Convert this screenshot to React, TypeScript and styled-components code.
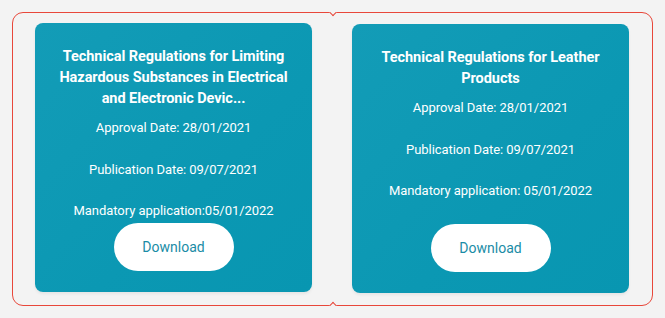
import { FC } from "react";
import styled, { createGlobalStyle } from "styled-components";

type Regulation = {
  title: string;
  approval: string;
  publication: string;
  mandatory: string;
  offset?: number;
};

const regulations: Regulation[] = [
  {
    title:
      "Technical Regulations for Limiting Hazardous Substances in Electrical and Electronic Devic...",
    approval: "Approval Date: 28/01/2021",
    publication: "Publication Date: 09/07/2021",
    mandatory: "Mandatory application:05/01/2022",
  },
  {
    title: "Technical Regulations for Leather Products",
    approval: "Approval Date: 28/01/2021",
    publication: "Publication Date: 09/07/2021",
    mandatory: "Mandatory application: 05/01/2022",
    offset: 1,
  },
];

const App: FC = () => (
  <>
    <GlobalStyle />
    <Page>
      <Slider>
        {regulations.map((item) => (
          <Slot key={item.title}>
            <Card $offset={item.offset ?? 0}>
              <Title>{item.title}</Title>
              <Detail>{item.approval}</Detail>
              <Detail>{item.publication}</Detail>
              <Detail>{item.mandatory}</Detail>
              <DownloadButton>Download</DownloadButton>
            </Card>
          </Slot>
        ))}
      </Slider>
    </Page>
  </>
);

export default App;

const GlobalStyle = createGlobalStyle`
  html, body {
    margin: 0;
    padding: 0;
    background: #f3f3f3;
  }
  body {
    font-family: Roboto, "Liberation Sans", sans-serif;
  }
`;

const Page = styled.div`
  width: 665px;
  height: 318px;
  padding: 12px 12px 0 12px;
  box-sizing: border-box;
`;

const Slider = styled.div`
  position: relative;
  width: 641px;
  height: 294px;
  box-sizing: border-box;
  border: 1px solid #e8473a;
  border-radius: 11px;
  display: flex;
  padding: 10px 23px 0 22px;
  gap: 40px;

  &::before,
  &::after {
    content: "";
    position: absolute;
    left: 317px;
    width: 4px;
    height: 4px;
    background: #f3f3f3;
    border: 1px solid #e8473a;
    transform: rotate(45deg);
  }

  &::before {
    top: -4px;
    border-top-color: transparent;
    border-left-color: transparent;
  }

  &::after {
    bottom: -4px;
    border-bottom-color: transparent;
    border-right-color: transparent;
  }
`;

const Slot = styled.div`
  flex: 0 0 277px;
`;

const Card = styled.div<{ $offset: number }>`
  margin-top: ${(p) => p.$offset}px;
  height: 269px;
  box-sizing: border-box;
  border-radius: 8px;
  background: linear-gradient(135deg, #139cb7 0%, #0b98b3 60%, #0896b1 100%);
  box-shadow: 0 2px 3px rgba(0, 0, 0, 0.06);
  padding: 23px 18px 21px;
  display: flex;
  flex-direction: column;
  align-items: center;
  color: #fff;
  text-align: center;
`;

const Title = styled.h3`
  margin: 0 0 10px;
  font-size: 14.5px;
  line-height: 21px;
  font-weight: 700;
  letter-spacing: -0.05px;
`;

const Detail = styled.p`
  margin: 0 0 24.5px;
  font-size: 13px;
  line-height: 17px;
  font-weight: 400;
  letter-spacing: -0.05px;

  &:nth-of-type(3) {
    margin-bottom: 0;
  }
`;

const DownloadButton = styled.button`
  margin-top: auto;
  flex-shrink: 0;
  width: 120px;
  height: 48px;
  border: none;
  border-radius: 24px;
  background: #fff;
  color: #1a8ca6;
  font-family: Roboto, "Liberation Sans", sans-serif;
  font-size: 14px;
  cursor: pointer;
`;
